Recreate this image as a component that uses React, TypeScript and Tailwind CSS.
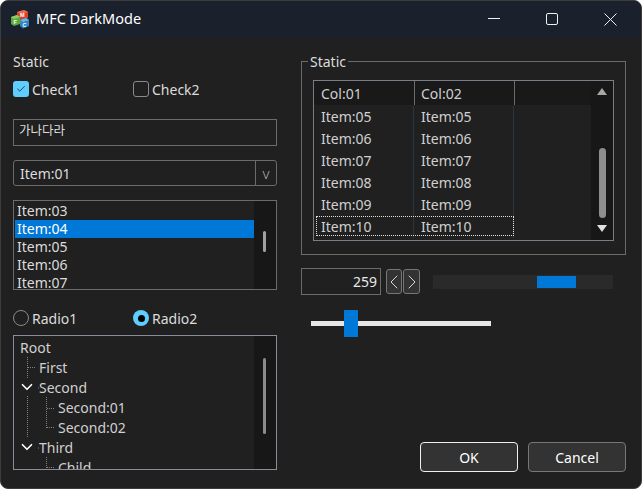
import { Check, ChevronDown, ChevronLeft, ChevronRight } from 'lucide-react';

const font = { fontFamily: '"Noto Sans", "Noto Sans CJK KR", sans-serif' };

const LIST_ITEMS = ['Item:03', 'Item:04', 'Item:05', 'Item:06', 'Item:07'];
const ROWS = ['Item:05', 'Item:06', 'Item:07', 'Item:08', 'Item:09', 'Item:10'];

function AppIcon() {
  return (
    <svg width="20" height="20" viewBox="0 0 20 20" className="shrink-0">
      <path d="M7 3 L14 1 L18 3 L18 9 L11 11 L7 9Z" fill="#d8402c" />
      <path d="M14 1 L18 3 L11 5 L7 3Z" fill="#ee6a4d" />
      <path d="M1 8 L7 6 L10 8 L10 15 L4 17 L1 15Z" fill="#5da83c" />
      <path d="M10 11 L16 9 L19 11 L19 17 L13 19.5 L10 17Z" fill="#2f86c5" />
      <path d="M10 11 L16 9 L19 11 L13 13Z" fill="#6db5e0" />
      <path d="M1 8 L7 6 L10 8 L4 10Z" fill="#8fce63" />
      <text x="10" y="8" fontSize="5.5" fontWeight="700" fill="#fff" fontFamily="Liberation Sans">M</text>
      <text x="3.5" y="15" fontSize="5.5" fontWeight="700" fill="#fff" fontFamily="Liberation Sans">F</text>
      <text x="12.5" y="18" fontSize="5.5" fontWeight="700" fill="#fff" fontFamily="Liberation Sans">C</text>
    </svg>
  );
}

function TreeRow({ indent, label }: { indent: string; label: string }) {
  return <div className={`h-5 leading-5 ${indent}`}>{label}</div>;
}

export default function App() {
  return (
    <div
      style={font}
      className="relative h-[489px] w-[642px] overflow-hidden rounded-lg border border-[#3c3c3c] bg-[#202020] text-[14px] text-[#dcdcdc]"
    >
      {/* Title bar */}
      <div className="-mx-px -mt-px flex h-[38px] items-center bg-[#1a202c] pl-[10px] text-white">
        <AppIcon />
        <span className="ml-[6px] text-[14.5px]">MFC DarkMode</span>
        <div className="ml-auto flex items-center pr-[25px]">
          <svg width="13" height="13" viewBox="0 0 13 13" fill="none" stroke="#f0f0f0" className="mr-[45px]">
            <path d="M0 5.5H12" />
          </svg>
          <svg width="13" height="13" viewBox="0 0 13 13" fill="none" stroke="#f0f0f0" className="mr-[45px]">
            <rect x="0.5" y="0.5" width="11" height="11" rx="1.5" />
          </svg>
          <svg width="13" height="13" viewBox="0 0 13 13" fill="none" stroke="#f0f0f0">
            <path d="M0.5 0.5L12.5 12.5M12.5 0.5L0.5 12.5" />
          </svg>
        </div>
      </div>

      <div className="flex pl-[12px]">
        {/* Left column */}
        <div className="flex w-[264px] flex-col">
          <div className="mt-[14px] h-5 leading-5">Static</div>
          <div className="mt-[7px] flex h-5 items-center">
            <span className="flex h-4 w-4 items-center justify-center rounded-[3px] bg-[#60cdff]">
              <Check size={10} strokeWidth={1.6} className="text-black" />
            </span>
            <span className="ml-[3px] w-[101px]">Check1</span>
            <span className="h-4 w-4 rounded-[3px] border border-[#8a8a8a]" />
            <span className="ml-[3px]">Check2</span>
          </div>
          <div className="mt-[20px] flex h-[27px] items-center border border-[#6b6b6b] pb-[2px] pl-[5px] text-[12.5px]">
            가나다라
          </div>
          <div className="mt-[14px] flex h-[26px] items-center rounded-[3px] border border-[#6b6b6b]">
            <span className="flex-1 pl-[6px]">Item:01</span>
            <span className="flex h-full w-[21px] items-center justify-center border-l border-[#6b6b6b] text-[15px] font-light text-[#a8a8a8]">
              v
            </span>
          </div>
          <div className="mt-[14px] flex h-[90px] overflow-hidden border border-[#6b6b6b] pl-px">
            <div className="flex-1 pt-px">
              {LIST_ITEMS.map((item) => (
                <div
                  key={item}
                  className={`h-[18px] pl-[2px] leading-[18px] ${item === 'Item:04' ? 'bg-[#0078d7] text-white' : ''}`}
                >
                  {item}
                </div>
              ))}
            </div>
            <div className="w-[22px] bg-[#171717] pl-[9px] pt-[30px]">
              <div className="h-[21px] w-[3px] rounded-full bg-[#a0a0a0]" />
            </div>
          </div>
          <div className="mt-[18px] flex h-5 items-center">
            <span className="h-4 w-4 rounded-full border border-[#8a8a8a]" />
            <span className="ml-[3px] w-[101px]">Radio1</span>
            <span className="flex h-4 w-4 items-center justify-center rounded-full bg-[#60cdff]">
              <span className="h-[7px] w-[7px] rounded-full bg-black" />
            </span>
            <span className="ml-[3px]">Radio2</span>
          </div>
          <div className="relative mt-[7px] flex h-[135px] overflow-hidden border border-[#8a8d99] text-[#d0d0d0]">
            <div className="flex-1 pt-[2px]">
              <TreeRow indent="pl-[6px]" label="Root" />
              <TreeRow indent="pl-[25px]" label="First" />
              <TreeRow indent="pl-[25px]" label="Second" />
              <TreeRow indent="pl-[44px]" label="Second:01" />
              <TreeRow indent="pl-[44px]" label="Second:02" />
              <TreeRow indent="pl-[25px]" label="Third" />
              <TreeRow indent="pl-[44px]" label="Child" />
            </div>
            <div className="w-[22px] bg-[#171717] pl-[9px] pt-[22px]">
              <div className="h-[76px] w-[3px] rounded-full bg-[#8c8c8c]" />
            </div>
            {/* tree connectors */}
            <svg className="absolute left-0 top-0" width="60" height="133" fill="none" stroke="#808080" strokeDasharray="1 1">
              <path d="M13.5 21V42M14 31.5H22M13.5 60V102M32.5 61V92M33 72.5H41M33 91.5H41M32.5 121V132M33 131.5H41M24 52H26M24 112H26" />
            </svg>
            <ChevronDown size={18} strokeWidth={2.2} className="absolute left-[4px] top-[42px] text-white" />
            <ChevronDown size={18} strokeWidth={2.2} className="absolute left-[4px] top-[102px] text-white" />
          </div>
        </div>

        {/* Right column */}
        <div className="ml-[24px] flex w-[325px] flex-col">
          <div className="relative mt-[23px] h-[194px] border border-[#6b6b6b] px-[11px] pt-[18px]">
            <span className="absolute -top-[10px] left-[6px] h-5 bg-[#202020] px-[2px] leading-5">Static</span>
            <div className="relative flex h-[161px] overflow-hidden border border-[#7a7d85] text-[#d0d0d0]">
              <div className="flex-1">
                <div className="flex h-[24px] bg-[#191919] leading-[25px]">
                  <div className="w-[101px] border-r border-[#6b6b6b] pl-[7px]">Col:01</div>
                  <div className="w-[100px] border-r border-[#6b6b6b] pl-[6px]">Col:02</div>
                </div>
                <div className="pt-px">
                  {ROWS.map((row) => (
                    <div key={row} className="flex h-[22px] w-[200px] leading-[22px]">
                      <div className="w-[100px] border-r border-[#2c3440] pl-[7px]">{row}</div>
                      <div className="w-[100px] border-r border-[#2c3440] pl-[7px]">{row}</div>
                    </div>
                  ))}
                </div>
              </div>
              <div className="flex w-[22px] flex-col items-center bg-[#171717] pt-[7px]">
                <span className="h-0 w-0 border-x-[5px] border-b-[7px] border-x-transparent border-b-[#a8a8a8]" />
                <div className="mt-[53px] h-[70px] w-[7px] rounded-full bg-[#8e8e8e]" />
                <span className="mt-[7px] h-0 w-0 border-x-[5px] border-t-[7px] border-x-transparent border-t-[#e0e0e0]" />
              </div>
              <div className="absolute left-[2px] top-[135px] h-[20px] w-[198px] border border-dotted border-[#e0e0e0]" />
            </div>
          </div>

          <div className="mt-[13px] flex h-[27px] items-center">
            <div className="flex h-[27px] w-[80px] items-center justify-end border border-[#6b6b6b] pr-[3px] text-[#e8e8e8]">
              259
            </div>
            <button className="ml-[5px] flex h-[25px] w-[16px] items-center justify-center rounded-[3px] border border-[#777] bg-[#333]">
              <ChevronLeft size={24} strokeWidth={1} className="shrink-0 text-[#d8d8d8]" />
            </button>
            <button className="ml-px flex h-[25px] w-[17px] items-center justify-center rounded-[3px] border border-[#777] bg-[#333]">
              <ChevronRight size={24} strokeWidth={1} className="shrink-0 text-[#d8d8d8]" />
            </button>
            <div className="ml-[13px] h-[14px] w-[180px] bg-[#2a2a2a] py-px pl-[104px]">
              <div className="h-full w-[39px] bg-[#0078d7]" />
            </div>
          </div>

          <div className="relative ml-[10px] mt-[15px] flex h-[27px] w-[180px] items-center">
            <div className="h-[5px] w-full bg-[#e6e6e6]" />
            <div className="absolute left-[33px] top-0 h-[27px] w-[14px] bg-[#0078d7]" />
          </div>

          <div className="mt-[105px] flex justify-end gap-[10px]">
            <button className="h-[30px] w-[98px] rounded-[4px] border border-[#f0f0f0] bg-[#333] text-white">OK</button>
            <button className="h-[30px] w-[98px] rounded-[4px] border border-[#777] bg-[#333] text-white">Cancel</button>
          </div>
        </div>
      </div>
    </div>
  );
}
